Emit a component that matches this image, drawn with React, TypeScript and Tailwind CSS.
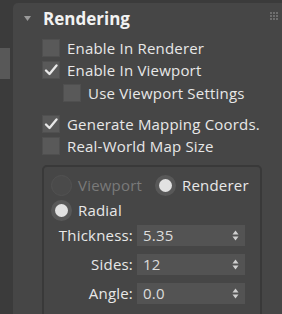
import React from "react";

const Check = () => (
  <svg width="14" height="12" viewBox="0 0 14 12" className="block">
    <path d="M2 6.5 L5.5 10 L12.5 1.5" fill="none" stroke="#e8e8e8" strokeWidth="2.3" strokeLinecap="round" strokeLinejoin="round" />
  </svg>
);

const CheckRow = ({ label, checked, indent }: { label: string; checked?: boolean; indent?: boolean }) => (
  <div className={"flex h-[18px] items-center gap-[7px] " + (indent ? "ml-[50px]" : "ml-[29px]")}>
    <div className="flex h-[18px] w-[18px] items-center justify-center border border-[#4f4f4f] bg-[#595959]">
      {checked && <Check />}
    </div>
    <span className="leading-none">{label}</span>
  </div>
);

const Radio = ({ on, disabled }: { on?: boolean; disabled?: boolean }) => (
  <div
    className={
      "flex h-[21px] w-[21px] shrink-0 items-center justify-center rounded-full " +
      (disabled ? "border border-[#525252] bg-[#4a4a4a]" : "bg-[#585858]")
    }
  >
    {on && <div className="h-[13px] w-[13px] rounded-full bg-[#e2e2e2]" />}
  </div>
);

const Spinner = ({ label, value }: { label: string; value: string }) => (
  <div className="flex h-[21px] items-center">
    <span className="w-[89px] text-right leading-none">{label}</span>
    <div className="ml-[4px] flex h-[21px] w-[108px] items-center justify-between bg-[#535353] pl-[6px] pr-[6px]">
      <span className="leading-none text-[#dcdcdc]">{value}</span>
      <svg width="7" height="11" viewBox="0 0 7 11">
        <path d="M3.5 0.5 L6.5 4.5 L0.5 4.5 Z" fill="#cfcfcf" />
        <path d="M3.5 10.5 L6.5 6.5 L0.5 6.5 Z" fill="#cfcfcf" />
      </svg>
    </div>
  </div>
);

export default function App() {
  return (
    <div className="flex h-[314px] w-[282px] overflow-hidden bg-[#3b3b3b] font-['Open_Sans',sans-serif] text-[15px] tracking-[0.2px] text-[#e8e8e8]">
      <div className="w-[13px] shrink-0 pt-[48px]">
        <div className="h-[31px] w-[10px] bg-[#585858]" />
      </div>
      <div className="relative mt-[3px] flex-1 rounded-tl-[5px] bg-[#464646]">
        {/* grip */}
        <div className="absolute left-[257px] top-[9px] grid grid-cols-3 gap-[1px]">
          {Array.from({ length: 9 }).map((_, i) => (
            <div key={i} className="h-[2px] w-[2px] bg-[#6e6e6e]" />
          ))}
        </div>

        <div className="mt-[4px] flex h-[22px] items-center">
          <svg width="7" height="5" viewBox="0 0 7 5" className="ml-[11px]">
            <path d="M0 0 L7 0 L3.5 5 Z" fill="#9a9a9a" />
          </svg>
          <span className="ml-[12px] text-[17px] font-bold leading-none tracking-normal text-[#f2f2f2]">Rendering</span>
        </div>

        <div className="mt-[10px]">
          <CheckRow label="Enable In Renderer" />
        </div>
        <div className="mt-[4px]">
          <CheckRow label="Enable In Viewport" checked />
        </div>
        <div className="mt-[5px]">
          <CheckRow label="Use Viewport Settings" indent />
        </div>
        <div className="mt-[13px]">
          <CheckRow label="Generate Mapping Coords." checked />
        </div>
        <div className="mt-[4px]">
          <CheckRow label="Real-World Map Size" />
        </div>

        <div className="ml-[29px] mt-[10px] h-[200px] w-[220px] rounded-[5px] border-2 border-[#393939] pl-[7px] pt-[8px]">
          <div className="flex h-[21px] items-center">
            <Radio disabled />
            <span className="ml-[6px] w-[77px] leading-none text-[#7a7a7a]">Viewport</span>
            <Radio on />
            <span className="ml-[6px] leading-none">Renderer</span>
          </div>
          <div className="mt-[4px] flex h-[21px] items-center">
            <Radio on />
            <span className="ml-[6px] leading-none">Radial</span>
          </div>
          <div className="-ml-[7px] mt-[4px] flex flex-col gap-[8px]">
            <Spinner label="Thickness:" value="5.35" />
            <Spinner label="Sides:" value="12" />
            <Spinner label="Angle:" value="0.0" />
          </div>
        </div>
      </div>
    </div>
  );
}
